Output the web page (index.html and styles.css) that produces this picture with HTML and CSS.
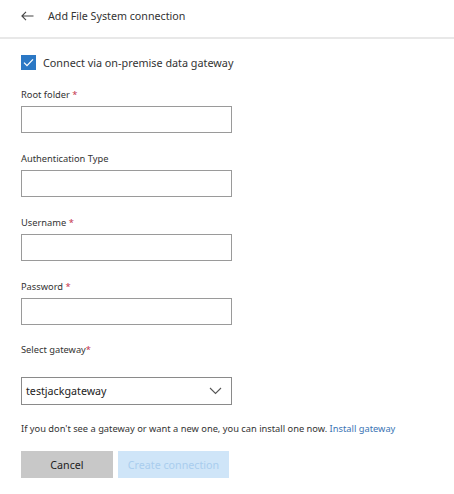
FILE: index.html
```html
<!DOCTYPE html>
<html lang="en">
<head>
    <meta charset="UTF-8">
    <meta name="viewport" content="width=device-width, initial-scale=1.0">
    <title>Add File System connection</title>
    <link rel="stylesheet" href="styles.css">
</head>
<body>
    <div class="panel">
        <div class="header">
            <svg class="back-icon" width="13" height="10" viewBox="0 0 13 10">
                <path d="M12.5 5H1M5 0.8L0.9 5L5 9.2" fill="none" stroke="#444" stroke-width="1.1"/>
            </svg>
            <span class="header-title">Add File System connection</span>
        </div>
        <div class="content">
            <label class="check-row">
                <span class="checkbox">
                    <svg width="11" height="9" viewBox="0 0 11 9">
                        <path d="M1 4.6L4 7.6L10 1.4" fill="none" stroke="#fff" stroke-width="1.3"/>
                    </svg>
                </span>
                Connect via on-premise data gateway
            </label>

            <div class="field">
                <label for="root">Root folder <span class="req">*</span></label>
                <input type="text" id="root">
            </div>
            <div class="field">
                <label for="auth">Authentication Type</label>
                <input type="text" id="auth">
            </div>
            <div class="field">
                <label for="user">Username <span class="req">*</span></label>
                <input type="text" id="user">
            </div>
            <div class="field">
                <label for="pass">Password <span class="req">*</span></label>
                <input type="password" id="pass">
            </div>
            <div class="field gateway-field">
                <label>Select gateway<span class="req">*</span></label>
                <div class="select-box">
                    <span>testjackgateway</span>
                    <svg width="13" height="8" viewBox="0 0 13 8">
                        <path d="M1 1L6.5 6.5L12 1" fill="none" stroke="#555" stroke-width="1.1"/>
                    </svg>
                </div>
            </div>

            <p class="help-text">If you don't see a gateway or want a new one, you can install one now. <a href="#">Install gateway</a></p>

            <div class="button-group">
                <button class="btn-cancel">Cancel</button>
                <button class="btn-create" disabled>Create connection</button>
            </div>
        </div>
    </div>
</body>
</html>
```

FILE: styles.css
```css
body {
    margin: 0;
    background: #fff;
    font-family: "Noto Sans", "Open Sans", sans-serif;
    color: #333;
}
.panel {
    width: 454px;
    height: 494px;
    box-sizing: border-box;
}
.header {
    height: 37px;
    display: flex;
    align-items: center;
    padding-left: 21px;
    border-bottom: 2px solid #e8e8e8;
    box-sizing: content-box;
}
.back-icon {
    margin-right: 14px;
    margin-top: -6px;
}
.header-title {
    font-size: 10.7px;
    color: #333;
    margin-top: -6px;
}
.content {
    padding: 16px 21px 0 21px;
}
.check-row {
    display: flex;
    align-items: center;
    font-size: 10.8px;
    color: #333;
    height: 15px;
}
.checkbox {
    width: 15px;
    height: 15px;
    background: #2b78c5;
    display: flex;
    align-items: center;
    justify-content: center;
    margin-right: 7px;
}
.field {
    display: flex;
    flex-direction: column;
    margin-top: 20px;
}
.check-row + .field {
    margin-top: 19px;
}
.field label {
    font-size: 9.3px;
    line-height: 12px;
    color: #333;
    margin-bottom: 5px;
}
.req {
    color: #c4314b;
}
.field input {
    width: 211px;
    height: 27px;
    box-sizing: border-box;
    border: 1px solid #9a9a9a;
    border-radius: 0;
    padding: 0 6px;
    outline: none;
}
.gateway-field {
    margin-top: 19px;
}
.gateway-field label {
    margin-bottom: 21px;
}
.select-box {
    width: 211px;
    height: 28px;
    box-sizing: border-box;
    border: 1px solid #8a8a8a;
    display: flex;
    align-items: center;
    justify-content: space-between;
    padding: 0 9px 0 4px;
    font-size: 10.7px;
    color: #222;
}
.help-text {
    font-size: 9.3px;
    line-height: 12px;
    margin: 18px 0 0 0;
    color: #333;
}
.help-text a {
    color: #3a74b4;
    text-decoration: none;
}
.button-group {
    display: flex;
    gap: 5px;
    margin-top: 16px;
}
.button-group button {
    height: 27px;
    border: none;
    border-radius: 0;
    font-family: inherit;
    font-size: 10.7px;
}
.btn-cancel {
    width: 92px;
    background: #c8c8c8;
    color: #222;
}
.btn-create {
    width: 111px;
    background: #cfe5f8;
    color: #a9cdee;
}
```
